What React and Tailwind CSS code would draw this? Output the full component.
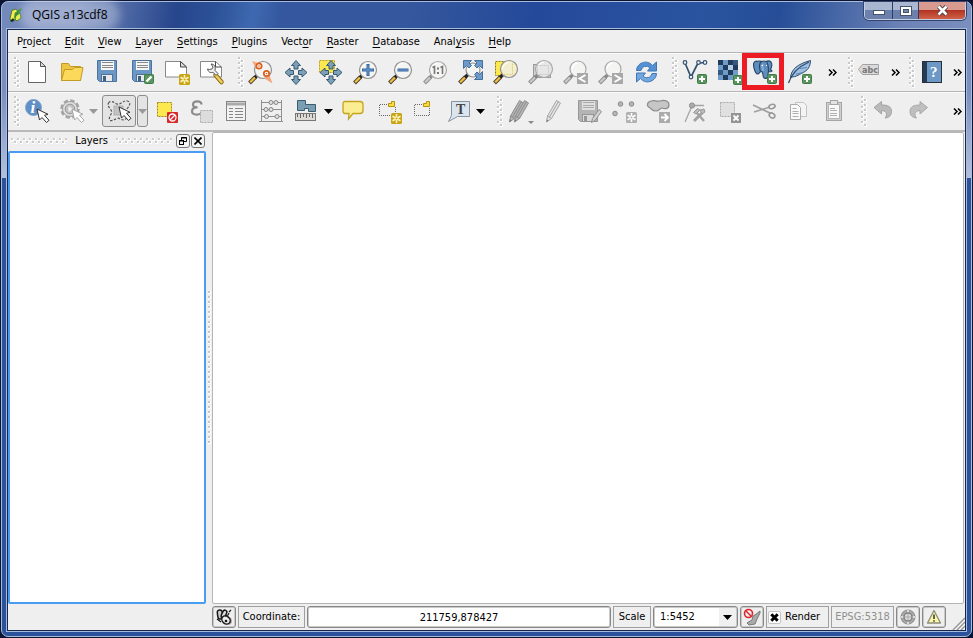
import React, { useState } from 'react';

const UI = "font-['Tahoma','DejaVu_Sans_Condensed','Noto_Sans',sans-serif]";

function Art({ children, className = '' }) {
  return (
    <svg width="35" height="32" viewBox="0 0 35 32" fill="none" aria-hidden="true" className={`block shrink-0 ${className}`}>
      {children}
    </svg>
  );
}

function Tool({ label, children }) {
  return (
    <button type="button" aria-label={label} title={label} className="block h-8 w-[35px] shrink-0">
      <Art>{children}</Art>
    </button>
  );
}

/* ---------- shared drawing pieces ---------- */

function Plus() {
  return (
    <g>
      <rect x="20.5" y="18.5" width="9" height="9" rx="1" fill="#5a9560" stroke="#3f7d46" />
      <path d="M25 20v6M22 23h6" stroke="#fff" strokeWidth="2" />
    </g>
  );
}

function Star({ gray }) {
  return (
    <g>
      <rect x="20" y="18" width="11" height="11" rx="1.5" fill={gray ? '#b0b0b0' : '#c9a415'} />
      <path d="M25.5 19v9M21.5 21.200l8 4.600M29.500 21.200l-8 4.600" stroke={gray ? '#fff' : '#fff6bf'} strokeWidth="1.600" />
      <circle cx="25.5" cy="23.5" r="1" fill={gray ? '#b0b0b0' : '#c9a415'} />
    </g>
  );
}

function Lens({ gray, x = 20, y = 14, r = 8.5, fill = '#f4f4f2' }) {
  return (
    <g>
      <path d="M6.5 27l6-6" stroke={gray ? '#8f8f8f' : '#4a4334'} strokeWidth="4" />
      <path d="M7.2 26.3l5-5" stroke={gray ? '#c9c9c9' : '#f5c13d'} strokeWidth="2.2" />
      <path d="M12 21.5l3-3" stroke={gray ? '#888' : '#222'} strokeWidth="3.4" />
      <circle cx={x} cy={y} r={r} fill={fill} stroke={gray ? '#a8a8a8' : '#909090'} strokeWidth="1.2" />
      <path d={`M${x - r + 2} ${y}a${r - 2} ${r - 2} 0 0 1 ${r - 2} ${-(r - 2)}`} stroke="#fff" strokeWidth="1.2" />
    </g>
  );
}

function PanArrows() {
  return (
    <g fill="#7ba0b8" stroke="#36586d" strokeWidth="1" strokeLinejoin="round">
      <path d="M18 4.500l4.500 5h-2.500v3.500h-4v-3.500h-2.500z" />
      <path d="M18 28.500l4.500-5h-2.500v-3.500h-4v3.500h-2.500z" />
      <path d="M7 16.500l5-4.500v2.500h3.500v4h-3.500v2.500z" />
      <path d="M29 16.500l-5-4.500v2.500h-3.500v4h3.500v2.500z" />
    </g>
  );
}

function Disk({ gray }) {
  const body = gray ? '#b4b4b4' : '#6b97c6';
  const line = gray ? '#979797' : '#4d739c';
  return (
    <g>
      <path d="M8.500 4.500h19v21h-17l-2-2z" fill={body} stroke={line} />
      <rect x="12" y="5" width="13" height="9" fill={gray ? '#e0e0e0' : '#f6f6f6'} />
      <path d="M13 6.500h11M13 9.500h11M13 11.500h11" stroke={gray ? '#aaa' : '#888'} />
      <rect x="12.500" y="18.500" width="11" height="7" fill={gray ? '#dadada' : '#e8e8e8'} stroke={line} />
      <rect x="14" y="20" width="3" height="5" fill={gray ? '#979797' : '#41607f'} />
    </g>
  );
}

function Cursor({ x, y, gray }) {
  return (
    <path
      transform={`translate(${x} ${y})`}
      d="M0 0l2.500 11 2.500-2.500 4.500 5 2.500-2.200-4.500-5 3.500-1z"
      fill="#fff"
      stroke={gray ? '#a5a5a5' : '#333'}
      strokeWidth="1"
      strokeLinejoin="round"
    />
  );
}

function Pencil({ x = 0, fill = '#e2e2e2', line = '#a5a5a5' }) {
  return (
    <g transform={`translate(${x} 0)`}>
      <path d="M10.500 27l1-6 9-15.500 4 2.500-9 15.500z" fill={fill} stroke={line} strokeLinejoin="round" />
      <path d="M13.500 22l9-15.500M11.500 21l4 2.500" stroke={line} />
      <path d="M10.500 27l.5-2.500 1.500 1z" fill="#777" />
    </g>
  );
}

/* ---------- toolbar furniture ---------- */

function Handle({ className = 'w-[14px]' }) {
  return (
    <span className={`flex h-8 shrink-0 items-center justify-end ${className}`}>
      <svg width="5" height="30" viewBox="0 0 5 30" aria-hidden="true" className="overflow-visible">
        {[0, 1, 2, 3, 4, 5].map((i) => (
          <g key={i}>
            <path d={`M0 ${i * 5}h3v3h-3z`} fill="#fff" />
            <path d={`M0 ${i * 5}h2v2h-2z`} fill="#c9c9c9" />
            <path d={`M3 ${i * 5 + 3}h3v3h-3z`} fill="#fff" />
            <path d={`M3 ${i * 5 + 3}h2v2h-2z`} fill="#c9c9c9" />
          </g>
        ))}
      </svg>
    </span>
  );
}

function Drop({ label, gray }) {
  return (
    <button type="button" aria-label={label} className="h-8 w-3 shrink-0">
      <svg width="9" height="5" viewBox="0 0 9 5" aria-hidden="true">
        <path d="M0 0h9L4.500 5z" fill={gray ? '#999' : '#000'} />
      </svg>
    </button>
  );
}

function More({ className = '' }) {
  return (
    <button type="button" aria-label="More tools" className={`flex h-8 shrink-0 items-center justify-center ${className}`}>
      <svg width="9" height="7" viewBox="0 0 9 7" fill="none" aria-hidden="true">
        <path d="M1 .5l3 3-3 3M5 .5l3 3-3 3" stroke="#000" strokeWidth="1.500" />
      </svg>
    </button>
  );
}

/* ---------- toolbars ---------- */

function FileToolbar() {
  return (
    <div role="toolbar" aria-label="Project and navigation" className="flex h-[39px] shrink-0 items-center border-b border-[#b5b5b5] shadow-[inset_0_1px_0_#fbfbfb]">
      <Handle className="w-[11px]" />
      <Tool label="New project">
        <path d="M9.500 5.500h12l5 5v16h-17z" fill="#fff" stroke="#666" />
        <path d="M21.500 5.500v5h5z" fill="#ddd" stroke="#555" />
      </Tool>
      <Tool label="Open project">
        <path d="M7.500 24.500v-17h7l2 3h10v14z" fill="#eec540" stroke="#c39a24" />
        <path d="M7.500 24.500l3-11h8l2-2h8.500l-2.500 13z" fill="#fcd95a" stroke="#c39a24" />
      </Tool>
      <Tool label="Save project"><Disk /></Tool>
      <Tool label="Save as">
        <Disk />
        <rect x="20.500" y="18.500" width="9" height="9" rx="1" fill="#5a9560" stroke="#3f7d46" />
        <path d="M22.500 25.500l5-5" stroke="#fff" strokeWidth="2.400" />
      </Tool>
      <Tool label="New composer">
        <path d="M6.500 5.500h15l6 5.500v10h-21z" fill="#fff" stroke="#888" />
        <path d="M21.500 5.500v5.500h6z" fill="#ddd" stroke="#444" />
        <Star />
      </Tool>
      <Tool label="Composer manager">
        <path d="M6.500 5.500h15l6 5.500v10h-21z" fill="#fff" stroke="#888" />
        <path d="M21.500 5.500v5.500h6" stroke="#444" />
        <path d="M21.500 19l6 7" stroke="#8d6a14" strokeWidth="4.500" strokeLinecap="round" />
        <path d="M21.500 19l6 7" stroke="#f2cf5b" strokeWidth="2.600" strokeLinecap="round" />
        <path d="M13.500 13c1 4 4 4 5.500 3.200l3 3.300 2-2-3-3c1-4-1-6.500-4-6.500l2 3-1 2-2.500.500z" fill="#eee" stroke="#555" strokeLinejoin="round" />
      </Tool>
      <Handle />
      <Tool label="Zoom native">
        <Lens />
        <path d="M9 5l8 2.500-4 5zM29.500 27.500l-3-8-5 3z" fill="#f3a679" />
        <circle cx="16" cy="10" r="2.700" fill="#fff" stroke="#dd5d1c" strokeWidth="1.700" />
        <circle cx="23.500" cy="17.500" r="2.700" fill="#fff" stroke="#dd5d1c" strokeWidth="1.700" />
        <circle cx="16" cy="10" r=".8" fill="#dd5d1c" />
        <circle cx="23.500" cy="17.500" r=".8" fill="#dd5d1c" />
      </Tool>
      <Tool label="Pan map"><PanArrows /></Tool>
      <Tool label="Pan to selection">
        <rect x="6.500" y="4.500" width="15" height="12" fill="#fce94f" stroke="#b5a01f" strokeDasharray="2 1" />
        <PanArrows />
      </Tool>
      <Tool label="Zoom in">
        <Lens />
        <path d="M20 8v12M14 14h12" stroke="#34659a" strokeWidth="3" />
        <path d="M20 9v10M15 14h10" stroke="#6c9fd8" strokeWidth="1" />
      </Tool>
      <Tool label="Zoom out">
        <Lens />
        <path d="M14.500 14h11" stroke="#34659a" strokeWidth="3" />
        <path d="M15 14h10" stroke="#6c9fd8" strokeWidth="1" />
      </Tool>
      <Tool label="Zoom to native resolution">
        <Lens gray />
        <path d="M14.500 11.500l2-1v7.500M22.500 11.500l2-1v7.500" stroke="#777" strokeWidth="1.600" />
        <path d="M19 11.500h2v2h-2zM19 16h2v2h-2z" fill="#777" />
      </Tool>
      <Tool label="Zoom full">
        <Lens r={7} />
        <g fill="#6c9acb" stroke="#466f9b" strokeLinejoin="round">
          <path d="M10.500 4.500h8l-2.500 2.500 2.500 2.500-2.500 2.500-2.500-2.500-3 3z" />
          <path d="M29.500 4.500h-8l2.500 2.500-2.500 2.500 2.500 2.500 2.500-2.500 3 3z" />
          <path d="M29.500 23.500h-8l2.500-2.500-2.500-2.500 2.500-2.500 2.500 2.500 3-3z" />
        </g>
      </Tool>
      <Tool label="Zoom to selection">
        <rect x="7.500" y="5.500" width="16" height="14" fill="#fce94f" stroke="#8d7a15" strokeDasharray="2 1" />
        <Lens x={21} y={13} fill="#f3efce" />
        <path d="M24.500 7.500v11h-9" stroke="#dccf7d" strokeDasharray="2 1" />
      </Tool>
      <Tool label="Zoom to layer">
        <rect x="10.500" y="8.500" width="17" height="13" fill="#d0d0d0" stroke="#999" />
        <Lens gray x={21} y={13} fill="#e6e6e6" />
        <path d="M14.500 9.500h11v9h-11z" stroke="#d2d2d2" />
      </Tool>
      <Tool label="Zoom last">
        <Lens gray y={13} r={8} />
        <rect x="19" y="17" width="11" height="11" fill="#a8a8a8" />
        <path d="M27.500 19l-6 3.500 6 3.500" stroke="#fff" strokeWidth="2" />
      </Tool>
      <Tool label="Zoom next">
        <Lens gray y={13} r={8} />
        <rect x="19" y="17" width="11" height="11" fill="#a8a8a8" />
        <path d="M21.500 19l6 3.500-6 3.500" stroke="#fff" strokeWidth="2" />
      </Tool>
      <Tool label="Refresh">
        <path d="M8.500 14.500c0-7 10-12 16-5l4-3.500v9h-9l2.500-3c-3-3-8-2-9 2.500z" fill="#5591d2" stroke="#3c76b9" strokeLinejoin="round" />
        <path d="M28.500 17.500c0 7-10 12-16 5l-4 3.500v-9h9l-2.500 3c3 3 8 2 9-2.500z" fill="#74a7de" stroke="#3c76b9" strokeLinejoin="round" />
      </Tool>
      <Handle />
      <Tool label="Add vector layer">
        <path d="M8 7l6 14 6-12c1-2 2.500-2.500 8-2.500" stroke="#34516e" strokeWidth="1.700" />
        <g fill="#eef3f8" stroke="#34516e" strokeWidth="1.200">
          <circle cx="8" cy="6.500" r="1.800" /><circle cx="21.500" cy="6.500" r="1.800" /><circle cx="28" cy="6.500" r="1.800" /><circle cx="14" cy="21" r="1.800" />
        </g>
        <Plus />
      </Tool>
      <Tool label="Add raster layer">
        <rect x="6" y="4" width="20" height="20" fill="#6f9bc9" />
        <path d="M6 4h5v5H6zM16 4h5v5h-5zM11 9h5v5h-5zM21 9h5v5h-5zM16 14h5v5h-5zM11 19h5v5h-5z" fill="#203c5c" />
        <path d="M21 4h5v5h-5zM6 14h5v5H6z" fill="#35587e" />
        <path d="M16 9h5v5h-5z" fill="#b3cbe4" />
        <g transform="translate(1 1)"><Plus /></g>
      </Tool>
      <button type="button" aria-label="Add PostGIS layers" title="Add PostGIS layers" className="relative block h-8 w-[35px] shrink-0">
        <Art>
          <g fill="#5f8dbd" stroke="#234668" strokeWidth="1.100" strokeLinejoin="round">
            <path d="M9.500 5C6.500 5.500 6 8 7 12c1 4 2.500 6.500 4 6 1-.300 1.500-1.500 2-2l2-.500c1 1 1 5 1.500 6 1 1.500 3.500 1 4-.500.500-2 .5-4 1-5.500 1 .5 3 .3 3.500-.500l-1.500-1.500c1.500-3 1.700-6 .5-7.500-1.500-1.500-4-1-5-.500-1-.500-3-.5-4 0-1.500-.700-3.500-.700-5.500 0z" />
            <path d="M15 5.200C12 6 12 12 13.500 15.500M19.500 5.500c1.500 2 2 6 2 10" fill="none" />
          </g>
          <path d="M16 8c-1 3-.5 5 .5 7" stroke="#86add6" strokeWidth="2" />
          <path d="M14.500 9.500h1.500M19 9.500h1" stroke="#fff" />
          <Plus />
        </Art>
        <span className="pointer-events-none absolute -left-[5px] -top-[3px] h-[37px] w-[42px] border-[5px] border-[#ed1c24]" />
      </button>
      <Tool label="Add SpatiaLite layer">
        <path d="M8.500 22c.5-9 7.500-14 20-17.500 0 6-3 10.500-8.500 12.500-3 2-7 4-10 4z" fill="#9fc0e2" stroke="#2c4c6e" strokeLinejoin="round" />
        <path d="M6.500 27C9 19 16 11 27 6" stroke="#2c4c6e" strokeWidth="1.300" />
        <path d="M14 18l8-1.500M18 12.500l7-1" stroke="#5c86b3" />
        <Plus />
      </Tool>
      <More className="w-[31px]" />
      <Handle className="w-[5px]" />
      <Tool label="Labeling">
        <path d="M5.500 13.500l4-5h16v10h-16z" fill="#dadada" stroke="#a2a2a2" />
        <text x="9" y="17" fontSize="9" fontWeight="bold" fill="#777" fontFamily="DejaVu Sans Condensed, sans-serif">abc</text>
      </Tool>
      <More className="w-[14px]" />
      <Handle className="w-3" />
      <Tool label="Help">
        <rect x="8.500" y="5.500" width="19" height="21" fill="#6d97c4" stroke="#26303a" />
        <rect x="9" y="6" width="4" height="20" fill="#263c54" />
        <text x="16" y="21" fontSize="15" fontWeight="bold" fill="#fff" fontFamily="Liberation Serif, serif">?</text>
      </Tool>
      <More className="ml-auto w-4" />
    </div>
  );
}

function EditToolbar() {
  return (
    <div role="toolbar" aria-label="Attributes and editing" className="flex h-10 shrink-0 items-center border-b-2 border-[#b9b9b9] shadow-[inset_0_1px_0_#fbfbfb]">
      <Handle className="w-[11px]" />
      <Tool label="Identify features">
        <circle cx="14.500" cy="12.500" r="8" fill="#5f8fc4" stroke="#7fa3ce" />
        <text x="11.500" y="18" fontSize="17" fontStyle="italic" fontWeight="bold" fill="#fff" fontFamily="Liberation Serif, serif">i</text>
        <Cursor x={18} y={14} />
      </Tool>
      <Tool label="Run feature action">
        <circle cx="16" cy="14" r="8.500" stroke="#a5a5a5" strokeWidth="2.500" strokeDasharray="4.400 2.270" />
        <circle cx="16" cy="14" r="7.500" fill="#dedede" stroke="#a0a0a0" />
        <circle cx="16" cy="14" r="4.800" fill="#c2c2c2" stroke="#959595" />
        <path d="M14.500 11l4.500 3-4.500 3z" fill="#f0f0f0" />
        <Cursor x={18} y={14} gray />
      </Tool>
      <Drop label="Action menu" gray />
      <button type="button" aria-label="Select features" aria-pressed="true" className="ml-px h-8 w-[34px] shrink-0 overflow-hidden rounded-[3px] border border-[#8c8c8c] bg-[#e4e4e4]">
        <Art className="-ml-px -mt-px">
          <path d="M6.500 8c2-3 5-1 8 1 5 1 6-4 11-3 4 1 2 6-1 8-3 3-1 6 0 9-2 3-5 2-8 0-4 1-7 4-9 2-1-4 3-6 2-9S5 12 6.500 8z" stroke="#555" strokeWidth="1.200" strokeDasharray="2.500 1.500" />
          <rect x="12" y="11" width="9" height="9" fill="#c2c2c2" stroke="#adadad" />
          <Cursor x={17} y={12} />
        </Art>
      </button>
      <button type="button" aria-label="Selection modes" className="ml-px mr-px flex h-8 w-[11px] shrink-0 items-center justify-center rounded-[3px] border border-[#8c8c8c] bg-[#e4e4e4]">
        <svg width="9" height="5" viewBox="0 0 9 5" aria-hidden="true"><path d="M0 0h9L4.500 5z" fill="#999" /></svg>
      </button>
      <Tool label="Deselect features">
        <rect x="8.500" y="7.500" width="14" height="14" fill="#fce94f" stroke="#a18a1a" strokeDasharray="2 1" />
        <rect x="18" y="17" width="11" height="11" rx="1" fill="#d9262b" />
        <circle cx="23.500" cy="22.500" r="3.500" stroke="#fff" strokeWidth="1.300" />
        <path d="M21 25l5-5" stroke="#fff" strokeWidth="1.300" />
      </Tool>
      <Tool label="Select by expression">
        <path d="M17.500 9.500c0-4-8.500-4.500-8.500 0 0 2 2 3 4.500 3C11 12 8 13 8 16.500c0 4.500 9 3.500 10 .500" stroke="#8b8b8b" strokeWidth="2.200" />
        <rect x="16.500" y="15.500" width="12" height="12" fill="#dcdcdc" stroke="#aaa" strokeDasharray="2 1" />
      </Tool>
      <Tool label="Open attribute table">
        <rect x="7.500" y="6.500" width="19" height="19" fill="#f2f2f2" stroke="#858585" />
        <path d="M8 9h18" stroke="#aaa" strokeWidth="3" />
        <path d="M10 13.500h4M16 13.500h8M10 16.500h4M16 16.500h8M10 19.500h4M16 19.500h8M10 22.500h4M16 22.500h8" stroke="#858585" />
      </Tool>
      <Tool label="Field calculator">
        <path d="M7.500 5v22M27.500 5v22M5 26.500h24M8 7.500h19M8 14.500h19M8 21.500h19" stroke="#909090" />
        <g fill="#e3e3e3" stroke="#858585"><circle cx="17" cy="7.500" r="2" /><circle cx="22" cy="7.500" r="2" /><circle cx="12" cy="14.500" r="2" /><circle cx="17" cy="14.500" r="2" /><circle cx="12.500" cy="21.500" r="2" /><circle cx="23" cy="21.500" r="2" /></g>
      </Tool>
      <Tool label="Measure line">
        <path d="M8.500 5.500h8v4h10v7h-7v-3h-4v2h-7z" fill="#7a9fb5" stroke="#3b5d70" />
        <rect x="6.500" y="18.500" width="20" height="7" fill="#dcdad2" stroke="#777" />
        <path d="M8.500 19v3M11.500 19v4M14.500 19v3M17.500 19v4M20.500 19v3M23.500 19v4" stroke="#666" />
      </Tool>
      <Drop label="Measure tools" />
      <Tool label="Map tips">
        <path d="M9 6.500h15q3 0 3 3v6q0 3-3 3h-7l-4.500 5.500.500-5.500h-4q-2 0-2-3v-6q0-3 2-3z" fill="#fbee92" stroke="#c4a41d" strokeWidth="1.300" />
      </Tool>
      <Tool label="New bookmark">
        <path d="M16 9.500H8.500v11H19M24.500 12v5" stroke="#666" strokeDasharray="1 1" />
        <path d="M20.500 6.500h3v5h-6v-3h3z" fill="#f8dd3c" stroke="#b3930f" />
        <Star />
      </Tool>
      <Tool label="Show bookmarks">
        <path d="M16 9.500H8.500v11h15V12" stroke="#666" strokeDasharray="1 1" />
        <path d="M20.500 6.500h3v5h-6v-3h3z" fill="#f8dd3c" stroke="#b3930f" />
      </Tool>
      <Tool label="Text annotation">
        <path d="M10.500 6.500h18v15h-12l-9 5 3-6z" fill="#dbe5ef" stroke="#8794a0" />
        <text x="15" y="19" fontSize="14" fill="#444" fontWeight="bold" fontFamily="Liberation Serif, serif">T</text>
      </Tool>
      <Drop label="Annotation menu" />
      <Handle />
      <Tool label="Current edits">
        <Pencil x={-3} fill="#b4b4b4" line="#8e8e8e" />
        <Pencil x={2} fill="#b4b4b4" line="#8e8e8e" />
        <path d="M26 26h6l-3 3z" fill="#888" />
      </Tool>
      <Tool label="Toggle editing"><Pencil x={-1} /></Tool>
      <Tool label="Save layer edits">
        <g transform="translate(-2 1)"><Disk gray /></g>
        <path d="M19.500 27.500l1-4 6.500-9 2.500 2-6.500 9z" fill="#d2d2d2" stroke="#8f8f8f" />
      </Tool>
      <Tool label="Add feature">
        <g fill="#b5b5b5" stroke="#8c8c8c"><circle cx="13.500" cy="9" r="2.300" /><circle cx="24.500" cy="9" r="2.300" /><circle cx="8" cy="18.500" r="2.300" /></g>
        <g transform="translate(-1 -1)"><Star gray /></g>
      </Tool>
      <Tool label="Move feature">
        <path d="M9 6c4-1.500 5 1 9 0 5-1.500 9 0 9 4s-4 4-7 3c-2 0-3 3-6 3-4 0-4-2-6-3-4-2-3-6 1-7z" fill="#c6c6c6" stroke="#8c8c8c" strokeWidth="1.200" />
        <rect x="17" y="17" width="11" height="11" fill="#ababab" />
        <path d="M19 22.500h6M22.500 19l3.500 3.500-3.500 3.500" stroke="#fff" strokeWidth="1.800" />
      </Tool>
      <Tool label="Node tool">
        <path d="M8 27l7-16M15 10.500h12" stroke="#a5a5a5" strokeWidth="1.300" />
        <circle cx="15" cy="10.500" r="2.600" fill="#aaa" stroke="#909090" />
        <path d="M17 26l8-8" stroke="#a2a2a2" strokeWidth="3" />
        <path d="M19 17l8 9" stroke="#a2a2a2" strokeWidth="2.400" />
        <path d="M16.500 17.500l4-4 2.500 1.500-4 4zM23 15l4-1 1 3-3 2z" fill="#bbb" stroke="#999" />
      </Tool>
      <Tool label="Delete selected">
        <rect x="8.500" y="7.500" width="14" height="14" fill="#e0e0e0" stroke="#aaa" strokeDasharray="2 1" />
        <rect x="19" y="18" width="10" height="10" fill="#959595" />
        <path d="M21.500 20.500l5 5M26.500 20.500l-5 5" stroke="#fff" strokeWidth="1.800" />
      </Tool>
      <Tool label="Cut features">
        <path d="M6 10l18 8.500M7 17l16-5" stroke="#a0a0a0" strokeWidth="1.600" />
        <ellipse cx="25" cy="11.500" rx="3.200" ry="2" stroke="#999" strokeWidth="1.600" transform="rotate(-18 25 11.500)" />
        <ellipse cx="25" cy="20.500" rx="3" ry="2.300" stroke="#999" strokeWidth="1.600" transform="rotate(35 25 20.500)" />
      </Tool>
      <Tool label="Copy features">
        <path d="M13.500 7.500h8l3 3v11h-11z" fill="#f4f4f4" stroke="#c2c2c2" />
        <path d="M8.500 9.500h7l3 3v12h-10z" fill="#fafafa" stroke="#aaa" />
        <path d="M10.500 13.500h4M10.500 16.500h6M10.500 18.500h6M10.500 21.500h6" stroke="#b0b0b0" />
      </Tool>
      <Tool label="Paste features">
        <rect x="9.500" y="7.500" width="15" height="18" fill="#cfcfcf" stroke="#a5a5a5" />
        <path d="M11.500 9.500h11v14h-11z" fill="#f9f9f9" stroke="#b5b5b5" />
        <rect x="13.500" y="5.500" width="7" height="4" fill="#e3e3e3" stroke="#a5a5a5" />
        <path d="M13 13.500h5M13 15.500h7M13 18.500h7M13 20.500h7" stroke="#b0b0b0" />
      </Tool>
      <Handle />
      <Tool label="Undo">
        <path d="M8 12.500l7.500-6v3.500c7 0 10 2 10 6.500 0 3.500-2 6-6.500 6.500 2-2 3-7-3.500-7.500v3.500z" fill="#bababa" stroke="#a3a3a3" strokeLinejoin="round" />
      </Tool>
      <Tool label="Redo">
        <path d="M26.500 12.500l-7.500-6v3.500c-7 0-10 2-10 6.500 0 3.500 2 6 6.500 6.500-2-2-3-7 3.500-7.500v3.500z" fill="#bfbfbf" stroke="#a8a8a8" strokeLinejoin="round" />
      </Tool>
      <More className="ml-auto w-4" />
    </div>
  );
}

/* ---------- window chrome ---------- */

function TitleBar() {
  return (
    <header className="flex h-[26px] shrink-0 items-start">
      <div className="flex h-full items-center gap-1 pl-0.5">
        <svg width="16" height="16" viewBox="0 0 16 16" aria-hidden="true">
          <path d="M4 3.500l4-1.500 2 3-3 1 .5 6-3.500 2.500-2-3z" fill="#f4ec4c" stroke="#39691c" strokeWidth=".8" />
          <path d="M8 8l4-2 1 5-4 3-2-2z" fill="#e3ea45" stroke="#2d6a1d" strokeWidth=".8" />
          <path d="M6 12C6 8 8 3 14 1l-3 6-4 3z" fill="#2e8b2e" />
          <path d="M2 14l3-3 1.500 2.500-2.500 1.500z" fill="#17330d" />
        </svg>
        <h1 className="rounded-full bg-white/30 px-1 font-['Segoe_UI','Open_Sans','Noto_Sans',sans-serif] text-xs leading-4 text-black shadow-[0_0_8px_8px_rgba(255,255,255,0.3)]">QGIS a13cdf8</h1>
      </div>
      <div className="ml-auto mr-px flex h-[18px] overflow-hidden rounded-b-[5px] border border-t-0 border-[#c3cde3] shadow-[0_0_0_1px_#33456f]">
        <button type="button" aria-label="Minimize" className="flex w-7 items-center justify-center border-r border-[#2c3e68] bg-linear-to-b from-[#aab7d0] from-45% to-[#6b80aa] to-50%">
          <svg width="12" height="10" viewBox="0 0 12 10" aria-hidden="true"><rect x=".5" y="4.500" width="11" height="4" fill="#fff" stroke="#46536c" /></svg>
        </button>
        <button type="button" aria-label="Maximize" className="flex w-[26px] items-center justify-center border-r border-[#2c3e68] bg-linear-to-b from-[#aab7d0] from-45% to-[#6b80aa] to-50%">
          <svg width="12" height="10" viewBox="0 0 12 10" aria-hidden="true"><rect x=".5" y=".5" width="11" height="9" fill="#fff" stroke="#46536c" /><rect x="3.500" y="3.500" width="5" height="3" fill="#7386ad" stroke="#46536c" /></svg>
        </button>
        <button type="button" aria-label="Close" className="flex w-[46px] items-center justify-center bg-linear-to-b from-[#d99a90] from-45% via-[#b33222] via-50% to-[#cf6248]">
          <svg width="13" height="11" viewBox="0 0 13 11" aria-hidden="true"><path d="M2.500 1.500l8 8M10.500 1.500l-8 8" stroke="#4a3a44" strokeWidth="4.400" /><path d="M2.500 1.500l8 8M10.500 1.500l-8 8" stroke="#fff" strokeWidth="2.600" /></svg>
        </button>
      </div>
    </header>
  );
}

const MENUS = [
  ['P', 'r', 'oject'], ['', 'E', 'dit'], ['', 'V', 'iew'], ['', 'L', 'ayer'], ['', 'S', 'ettings'], ['', 'P', 'lugins'],
  ['Vect', 'o', 'r'], ['', 'R', 'aster'], ['', 'D', 'atabase'], ['Anal', 'y', 'sis'], ['', 'H', 'elp'],
];

function MenuBar() {
  return (
    <nav aria-label="Main menu" className="flex h-[23px] shrink-0 items-end border-b border-[#b5b5b5] pb-0.5 pl-0.5">
      {MENUS.map(([a, b, c]) => (
        <button key={a + b + c} type="button" className="px-[7px] leading-4">
          {a}<u className="underline-offset-2">{b}</u>{c}
        </button>
      ))}
    </nav>
  );
}

function HDots({ id }) {
  return (
    <svg height="6" className="min-w-0 flex-1" aria-hidden="true">
      <defs>
        <pattern id={id} width="6" height="6" patternUnits="userSpaceOnUse">
          <path d="M0 0h3v3H0zM3 3h3v3H3z" fill="#fff" />
          <path d="M0 0h2v2H0zM3 3h2v2H3z" fill="#ccc" />
        </pattern>
      </defs>
      <rect width="100%" height="6" fill={`url(#${id})`} />
    </svg>
  );
}

function LayersPanel() {
  return (
    <aside aria-label="Layers" className="flex w-[198px] shrink-0 flex-col">
      <div className="flex h-[19px] shrink-0 items-center pb-px pl-[3px] pr-px">
        <HDots id="dots-left" />
        <h2 className="px-2 leading-4">Layers</h2>
        <HDots id="dots-right" />
        <button type="button" aria-label="Float panel" className="ml-1 flex h-3.5 w-3.5 items-center justify-center rounded-[3px] border border-[#777] bg-[#f4f4f4]">
          <svg width="8" height="8" viewBox="0 0 8 8" fill="none" aria-hidden="true"><path d="M2.500 3V.5h5v4H5" stroke="#000" /><path d="M2 1h6" stroke="#000" /><rect x=".5" y="3.500" width="4" height="4" stroke="#000" /><path d="M0 4h5" stroke="#000" /></svg>
        </button>
        <button type="button" aria-label="Close panel" className="ml-px flex h-3.5 w-3.5 items-center justify-center rounded-[3px] border border-[#777] bg-[#f4f4f4]">
          <svg width="8" height="8" viewBox="0 0 8 8" aria-hidden="true"><path d="M.5.5l7 7M7.500.5l-7 7" stroke="#000" strokeWidth="1.600" /></svg>
        </button>
      </div>
      <div className="flex-1 rounded-xs border-2 border-[#4a9cf2] bg-white" />
    </aside>
  );
}

function Splitter() {
  return (
    <div role="separator" aria-orientation="vertical" className="flex w-1.5 shrink-0 items-center justify-center">
      <svg width="3" height="155" viewBox="0 0 3 155" aria-hidden="true">
        {Array.from({ length: 31 }, (_, i) => (
          <g key={i}><path d={`M0 ${i * 5}h3v3H0z`} fill="#fff" /><path d={`M0 ${i * 5}h2v2H0z`} fill="#c8c8c8" /></g>
        ))}
      </svg>
    </div>
  );
}

const CELL = 'flex h-[22px] shrink-0 items-center border border-[#a0a0a0]';

function IconCell({ label, children }) {
  return (
    <button type="button" aria-label={label} title={label} className="flex h-[22px] w-6 shrink-0 items-center justify-center rounded-[3px] border border-[#888] bg-[#efefef] shadow-[inset_0_0_0_1px_#c9c9c9]">
      <svg width="18" height="18" viewBox="0 0 18 18" fill="none" aria-hidden="true">{children}</svg>
    </button>
  );
}

function StatusBar() {
  const [coordinate, setCoordinate] = useState('211759,878427');
  const [render, setRender] = useState(true);
  return (
    <footer className="flex h-[26px] shrink-0 items-center gap-0.5 pl-[204px]">
      <IconCell label="Toggle extents and mouse position">
        <ellipse cx="13" cy="13" rx="4" ry="4" fill="#b9a7a2" />
        <g stroke="#1a1a1a" strokeWidth="1.500">
          <rect x="2.500" y="2" width="5" height="9" rx="2.500" transform="rotate(-8 5 6)" fill="#ccc" />
          <rect x="7" y="2" width="4" height="8" rx="2" transform="rotate(25 9 6)" fill="#ddd" />
          <ellipse cx="11" cy="12" rx="4.500" ry="3.700" transform="rotate(40 11 12)" fill="#eee" />
          <path d="M10 8l3-1 1-2M2 11l4 3M14 4l2-2" strokeWidth="1.200" />
        </g>
        <circle cx="11" cy="13" r="1.300" fill="#111" />
      </IconCell>
      <label htmlFor="coordinate" className={`${CELL} w-[67px] justify-center`}>Coordinate:</label>
      <input
        id="coordinate"
        value={coordinate}
        onChange={(e) => setCoordinate(e.target.value)}
        className="h-[22px] min-w-0 flex-1 rounded-[3px] border border-[#888] bg-white pt-px text-center shadow-[inset_0_0_0_1px_#c9c9c9]"
      />
      <label htmlFor="scale" className={`${CELL} w-[38px] justify-center`}>Scale</label>
      <div className="relative h-[22px] w-[85px] shrink-0">
        <select id="scale" defaultValue="1:5452" className="h-full w-full appearance-none rounded-[3px] border border-[#888] bg-white bg-linear-to-r from-white from-78% to-[#f0f0f0] to-78% pl-1.5 pt-px shadow-[inset_0_0_0_1px_#c9c9c9]">
          <option>1:5452</option>
          <option>1:10000</option>
          <option>1:25000</option>
        </select>
        <svg width="9" height="5" viewBox="0 0 9 5" aria-hidden="true" className="pointer-events-none absolute right-1.5 top-[9px]"><path d="M0 0h9L4.500 5z" /></svg>
      </div>
      <IconCell label="Stop map drawing">
        <path d="M17 3l-5 4-2 1-1 4-5 3 2 2 6-1 2-5 3-6z" fill="#aaa" stroke="#777" />
        <circle cx="5.500" cy="5.500" r="4" stroke="#e0242a" strokeWidth="1.600" />
        <path d="M3 3l5 5" stroke="#e0242a" strokeWidth="1.400" />
      </IconCell>
      <label className={`${CELL} w-[63px] gap-1 pl-px`}>
        <span className="relative flex h-[13px] w-[13px] items-center justify-center rounded-xs border border-[#c4c4c4] bg-white">
          <input type="checkbox" checked={render} onChange={(e) => setRender(e.target.checked)} className="peer absolute inset-0 appearance-none" />
          <svg width="9" height="9" viewBox="0 0 9 9" aria-hidden="true" className="pointer-events-none hidden shrink-0 peer-checked:block"><path d="M1.300 1.300l6.400 6.400M7.700 1.300l-6.400 6.400" stroke="#000" strokeWidth="3" /></svg>
        </span>
        Render
      </label>
      <output className={`${CELL} w-[63px] justify-center text-[#8f8f8f]`}>EPSG:5318</output>
      <IconCell label="CRS status">
        <circle cx="9" cy="9" r="7" fill="#a8a8a8" stroke="#8a8a8a" />
        <path d="M9 2v14M2 9h14" stroke="#d9d9d9" strokeWidth="2" />
        <circle cx="9" cy="9" r="4" fill="#ddd" stroke="#808080" strokeWidth="1.500" />
        <path d="M9 6v6M6 9h6" stroke="#aaa" />
      </IconCell>
      <IconCell label="Messages">
        <path d="M9 2.500l6.500 12.500h-13z" fill="#fbf6a8" stroke="#8d8d78" strokeWidth="1.300" strokeLinejoin="round" />
        <path d="M9 6.500v4.500M9 12.300v1.500" stroke="#333" strokeWidth="1.500" />
      </IconCell>
      <svg width="13" height="13" viewBox="0 0 13 13" fill="none" aria-hidden="true" className="ml-1 self-end">
        <path d="M1 13L13 1M5 13l8-8M9 13l4-4" stroke="#999" strokeWidth="1.500" />
        <path d="M3 13L13 3M7 13l6-6" stroke="#fff" />
      </svg>
    </footer>
  );
}

export default function App() {
  return (
    <div className="flex min-h-screen flex-col bg-[#0b1533] p-px">
      <div className="flex flex-1 flex-col rounded-[7px] border border-[#a9bbdc] bg-[#2c529b] bg-[linear-gradient(100deg,#7388bb_0,#7388bb_8%,#27468c_18%,#2c5197_22%,#3e69b0_26%,#34579f_29%,#34579d_42%,#25499a_55%,#2a549f_72%,#264e97_80%,#6d83b6_93%,#7b8fbe_100%),linear-gradient(180deg,#7b8fbe_0,#7b8fbe_50%,#b3bfdb_100%)] bg-[length:100%_28px,100%_176px] bg-no-repeat px-1 pb-1">
        <TitleBar />
        <div className="flex flex-1 flex-col border border-[#a9bbdc]">
          <div className={`flex flex-1 flex-col border border-[#14274f] bg-[#efefef] text-[11px] text-black ${UI}`}>
            <MenuBar />
            <FileToolbar />
            <EditToolbar />
            <main className="flex flex-1">
              <LayersPanel />
              <Splitter />
              <section aria-label="Map canvas" className="mr-px flex-1 rounded-xs border border-[#b5b5b5] bg-white" />
            </main>
            <StatusBar />
          </div>
        </div>
      </div>
    </div>
  );
}
